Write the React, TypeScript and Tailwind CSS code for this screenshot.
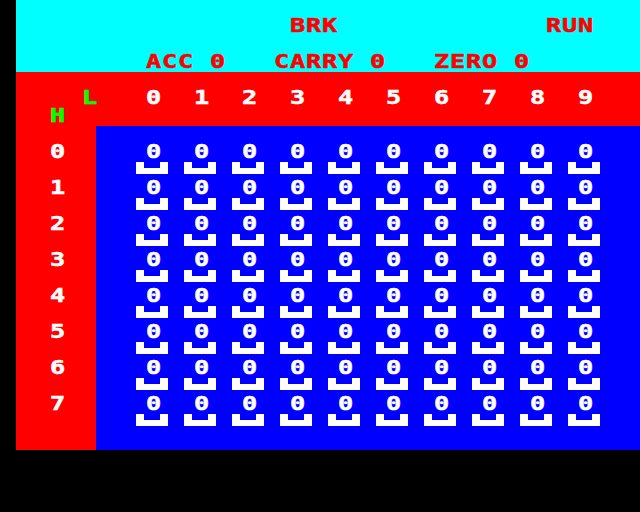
import React from 'react';

const COLS = [0, 1, 2, 3, 4, 5, 6, 7, 8, 9];
const ROWS = [0, 1, 2, 3, 4, 5, 6, 7];

// one character cell is 16x18, text is stretched to fill it
function Txt({ children, className = '' }: { children: React.ReactNode; className?: string }) {
  return (
    <span
      className={`ml-[2px] block h-[18px] origin-top-left scale-x-[1.33] whitespace-pre font-['DejaVu_Sans_Mono',monospace] text-[19px] leading-[14px] font-bold tracking-[0.6px] [-webkit-text-stroke:0.5px_currentColor] ${className}`}
    >
      {children}
    </span>
  );
}

function Tray() {
  return (
    <svg width="32" height="12" viewBox="0 0 32 12" className="block">
      <path d="M0 0H8V6H24V0H32V12H0Z" fill="#ffffff" />
    </svg>
  );
}

export default function App() {
  return (
    <div className="flex h-[512px] w-[640px] flex-col overflow-hidden bg-black pb-[62px] pl-4">
      {/* status panel */}
      <div className="grid h-[72px] grid-cols-[repeat(39,16px)] grid-rows-[repeat(4,18px)] bg-[#00ffff] text-[#ff0000]">
        <Txt className="col-start-18 row-start-2">BRK</Txt>
        <Txt className="col-start-34 row-start-2">RUN</Txt>
        <Txt className="col-start-9 row-start-4">ACC 0</Txt>
        <Txt className="col-start-17 row-start-4">CARRY 0</Txt>
        <Txt className="col-start-27 row-start-4">ZERO 0</Txt>
      </div>

      <div className="flex flex-1 flex-col bg-[#ff0000]">
        {/* L header row */}
        <div className="h-[54px] pt-[18px]">
          <div className="flex">
            <div className="ml-16 w-16 text-[#00ff00]">
              <Txt>L</Txt>
            </div>
            {COLS.map((c) => (
              <div key={c} className="w-12 text-white">
                <Txt>{c}</Txt>
              </div>
            ))}
          </div>
          <div className="pl-8 text-[#00ff00]">
            <Txt>H</Txt>
          </div>
        </div>

        <div className="flex flex-1">
          <div className="w-20 pt-[18px] pl-8 text-white">
            {ROWS.map((r) => (
              <div key={r} className="h-9">
                <Txt>{r}</Txt>
              </div>
            ))}
          </div>
          <div className="flex-1 bg-[#0000ff] pt-[18px] pl-10 text-white">
            {ROWS.map((r) => (
              <div key={r} className="flex h-9">
                {COLS.map((c) => (
                  <div key={c} className="w-12">
                    <div className="pl-2">
                      <Txt>0</Txt>
                    </div>
                    <Tray />
                  </div>
                ))}
              </div>
            ))}
          </div>
        </div>
      </div>
    </div>
  );
}
